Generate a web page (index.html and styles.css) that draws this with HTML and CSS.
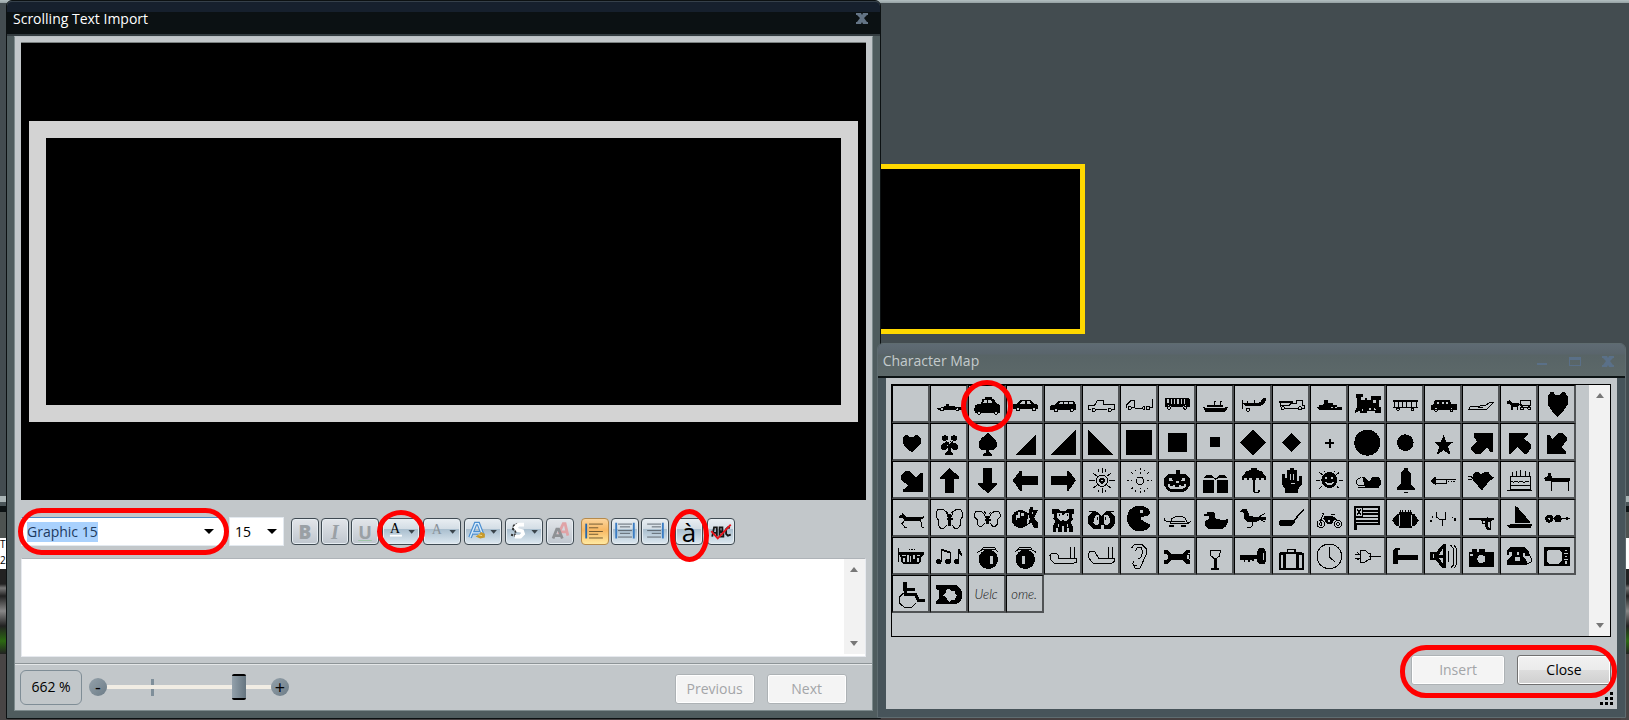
FILE: index.html
```html
<!DOCTYPE html>
<html lang="en">
<head>
<meta charset="utf-8">
<title>Scrolling Text Import</title>
<link rel="stylesheet" href="styles.css">
</head>
<body>
<main class="desktop">
  <div class="edge edge-left"><span class="scrap">T</span><span class="scrap">2s</span></div>
  <div class="edge edge-right"></div>
  <div class="sign"></div>

  <section class="window import" aria-labelledby="import-title">
    <header class="titlebar">
      <h1 id="import-title">Scrolling Text Import</h1>
      <button class="winbtn" type="button" aria-label="Close window"><svg width="12" height="11" viewBox="0 0 12 11"><path d="M0 0h5l1 2 1-2h5v2h-1L8 5l3 4h1v2H7L6 9l-1 2H0V9h1l3-4-3-3H0z"/></svg></button>
    </header>
    <div class="content">
      <div class="preview"><div class="preview-frame"></div></div>
      <div class="toolbar">
        <div class="combo font-combo"><span class="picked">Graphic 15</span><button type="button" class="drop" aria-label="Choose font"></button><span class="mark mark-font"></span></div>
        <div class="combo size-combo"><span>15</span><button type="button" class="drop" aria-label="Choose size"></button></div>
        <div class="tools">
          <button type="button" class="tool off bold" aria-label="Bold">B</button>
          <button type="button" class="tool off italic" aria-label="Italic">I</button>
          <button type="button" class="tool off under" aria-label="Underline">U</button>
        </div>
        <div class="tools wide">
          <button type="button" class="tool split" aria-label="Font colour"><svg viewBox="0 0 38 27"><text x="7" y="15" class="serif">A</text><path d="M7 17h13v2H7z" fill="#fff"/><path d="M27 12h7l-3.500 4z" class="arr"/></svg><span class="mark mark-round"></span></button>
          <button type="button" class="tool split" aria-label="Outline colour"><svg viewBox="0 0 38 27"><text x="8" y="16" class="serif pale">A</text><path d="M27 12h7l-3.500 4z" class="arr"/></svg></button>
          <button type="button" class="tool split" aria-label="Text fill"><svg viewBox="0 0 38 27"><path d="M5 20L11 5h3l5 13M8 15h8" fill="none" stroke="#4c8fd0" stroke-width="4"/><path d="M5 20L11 5h3l5 13M8 15h8" fill="none" stroke="#d9ecfb" stroke-width="1.500"/><path d="M11 19l3-2 3-3 4 2v4l-5 1z" fill="#c79a2c"/><path d="M14 17l4 1" stroke="#f6dc80"/><path d="M27 12h7l-3.500 4z" class="arr"/></svg></button>
          <button type="button" class="tool split" aria-label="Text shadow"><svg viewBox="0 0 38 27"><path d="M13 5l-5 2-1 4 3 2-1 5-4-1" fill="none" stroke="#333" stroke-width="2" stroke-dasharray="3 1"/><path d="M19 6h-6l-3 3 2 3 5 1 1 3-3 3H9" fill="none" stroke="#fff" stroke-width="4"/><path d="M27 12h7l-3.500 4z" class="arr"/></svg></button>
          <button type="button" class="tool off" aria-label="Clear style"><svg viewBox="0 0 27 27"><path d="M12 16L17 5h2l3 13M14 14h8" fill="none" stroke="#e0a3a6" stroke-width="3"/><path d="M6 21l4-10h2l4 10M7 18h8" fill="none" stroke="#8f9194" stroke-width="3"/></svg></button>
        </div>
        <div class="tools">
          <button type="button" class="tool on" aria-label="Align left"><svg viewBox="0 0 27 27"><path d="M4 5v16" stroke="#2668ae" stroke-width="2"/><path d="M7 5.500h15M7 9.500h10M7 13.500h15M7 16.500h10M7 20.500h15" stroke="#6b5530"/></svg></button>
          <button type="button" class="tool" aria-label="Align centre"><svg viewBox="0 0 27 27"><path d="M4 4v17M23 4v17" stroke="#3a7dc4" stroke-width="2"/><path d="M6 5.500h15M8 8.500h11M6 12.500h15M8 15.500h11M6 19.500h15" stroke="#59616a"/></svg></button>
          <button type="button" class="tool" aria-label="Align right"><svg viewBox="0 0 27 27"><path d="M22 4v17" stroke="#3a7dc4" stroke-width="2"/><path d="M5 5.500h15M10 8.500h10M5 12.500h15M10 15.500h10M5 19.500h15" stroke="#59616a"/></svg></button>
        </div>
        <div class="tools gap">
          <button type="button" class="tool accent" aria-label="Character map">à<span class="mark mark-tall"></span></button>
          <button type="button" class="tool" aria-label="Spelling"><svg viewBox="0 0 27 27"><path d="M4 19l2-10h3v10M4 15h5M12 19V9h3v4l-3 1h4v5h-4M23 10l-2-1-2 2v5l2 2 3-1" fill="none" stroke="#151515" stroke-width="2"/><path d="M3 13l7 8L24 6" fill="none" stroke="#e8141c" stroke-width="2"/></svg></button>
        </div>
      </div>
      <div class="editor"><textarea aria-label="Text"></textarea><div class="scroll"><i class="up"></i><i class="down"></i></div></div>
      <footer class="footer">
        <output class="percent">662 %</output>
        <div class="zoom">
          <button type="button" class="round" aria-label="Zoom out">-</button>
          <div class="track"><span class="tick"></span><input type="range" aria-label="Zoom" min="0" max="100" value="83"></div>
          <button type="button" class="round" aria-label="Zoom in">+</button>
        </div>
        <div class="nav"><button type="button" class="btn" disabled>Previous</button><button type="button" class="btn" disabled>Next</button></div>
      </footer>
    </div>
  </section>

  <section class="window charmap" aria-labelledby="map-title">
    <header class="titlebar">
      <h2 id="map-title">Character Map</h2>
      <button class="winbtn" type="button" aria-label="Minimize"><svg width="12" height="11" viewBox="0 0 12 11"><path d="M1 7h10v2H1z"/></svg></button>
      <button class="winbtn" type="button" aria-label="Maximize"><svg width="12" height="11" viewBox="0 0 12 11"><path d="M0 1h12v9H0zM1 4v5h10V4z" fill-rule="evenodd"/></svg></button>
      <button class="winbtn" type="button" aria-label="Close"><svg width="12" height="11" viewBox="0 0 12 11"><path d="M0 0h5l1 2 1-2h5v2h-1L8 5l3 4h1v2H7L6 9l-1 2H0V9h1l3-4-3-3H0z"/></svg></button>
    </header>
    <div class="content">
      <div class="list"><div class="cells" id="cells"></div><div class="scroll"><i class="up"></i><i class="down"></i></div></div>
      <div class="actions"><button type="button" class="btn" disabled>Insert</button><button type="button" class="btn live">Close</button><span class="mark mark-actions"></span></div>
      <svg class="grip" width="14" height="14" viewBox="0 0 14 14"><path d="M10 0h3v3h-3zM5 5h3v3H5zM10 5h3v3h-3zM0 10h3v3H0zM5 10h3v3H5zM10 10h3v3h-3z"/></svg>
    </div>
  </section>
</main>
<script src="script.js"></script>
</body>
</html>
```

FILE: styles.css
```css
* { box-sizing: border-box; }
body { margin: 0; font: 14px/20px "Open Sans", "Noto Sans", sans-serif; color: #000; }
button, input, textarea { font: inherit; color: inherit; }
button { padding: 0; }
h1, h2 { margin: 0; font-size: 14px; font-weight: 400; line-height: 20px; flex: 1; }

.desktop { position: relative; min-height: 100vh; overflow: hidden; background: linear-gradient(#b3bfc1, #95a1a3) top / 100% 3px no-repeat, linear-gradient(#453f40, #453f40) bottom / 100% 2px no-repeat, #434c50; }
.edge { position: absolute; top: 496px; bottom: 0; width: 8px; background: linear-gradient(#a9b4b5 0 6px, #4a5558 6px 10px, #0d1314 10px 16px, #4d5351 16px 42px, #fff 42px 73px, #222 73px 88px, #777 92px, #222 100px, #888 115px, #222 130px, #2c6a12 145px, #222 158px, #484545 158px); }
.edge-left { left: 0; padding-top: 40px; }
.edge-right { right: 0; }
.scrap { display: block; font-size: 10px; line-height: 16px; }
.sign { position: absolute; left: 50%; width: calc(17% - 6px); top: 164px; height: 170px; background: #000; border: 5px solid #ffd800; }

.window { position: absolute; display: flex; flex-direction: column; border: 1px solid #0c1112; border-radius: 6px 6px 0 0; }
.import { left: 6px; width: calc(54% - 5px); top: 0; bottom: 1px; background: #4f5c5e; }
.charmap { right: 3px; width: 46%; top: 343px; bottom: 2px; border-color: #5f6c70; background: #47545a; }
.titlebar { display: flex; align-items: center; gap: 21px; height: 35px; border-radius: 5px 5px 0 0; color: #fff; border-bottom: 2px solid #333c40; background: linear-gradient(#16202d 0 10px, #0b1113 10px 32px, #20292c); padding: 1px 12px 0 6px; border-top: 1px solid #35404a; }
.charmap .titlebar { height: 34px; color: #c4cbcd; background: linear-gradient(#5f6b74, #5a656c 10px, #586466 11px, #5c6869); border: 0; border-bottom: 2px solid #0d1415; padding: 2px 11px 0 5px; }
.winbtn { border: 0; background: none; display: flex; }
.winbtn path { fill: #637485; }
.charmap .winbtn path { fill: #5a7088; }
.content { flex: 1; display: flex; flex-direction: column; margin: 0 8px; background: #c2c7ca; min-height: 0; }
.import .content { margin: 0 7px 7px; padding: 5px 0 0; border: 1px solid #7d8a8c; border-top-color: #b9c0c3; }
.preview { flex: 1; margin: 0 6px; background: #000; padding: 78px 8px; display: flex; border-top: 1px solid #7a8080; }
.preview-frame { flex: 1; border: 17px solid #d3d3d3; }

.toolbar { display: flex; align-items: center; height: 58px; margin: 0 6px; padding-top: 5px; }
.combo { position: relative; display: flex; align-items: center; height: 29px; background: #fff; border: 1px solid #e3e9ef; border-top-color: #4a8cc7; }
.font-combo { width: 204px; padding-left: 5px; }
.size-combo { width: 55px; margin-left: 4px; border-top-color: #e3e9ef; padding-left: 5px; }
.picked { background: #a9d1fd; color: #1d3a5f; }
.drop { margin-left: auto; width: 22px; height: 22px; border: 0; background: none; display: grid; place-items: center; }
.drop::before { content: ""; border: 5px solid transparent; border-top-color: #000; border-bottom: 0; }
.font-combo .drop { margin-right: 4px; }
.tools { display: flex; gap: 2px; margin-left: 7px; }
.tools.wide { gap: 3px; margin-left: 3px; }
.tools.gap { gap: 4px; margin-left: 6px; }
.tool { position: relative; width: 28px; height: 27px; border: 1px solid #3f4a52; border-radius: 4px; background: linear-gradient(#e9eef2, #d3dde5 40%, #a9bece 41%, #dde8f0); box-shadow: inset 0 0 0 1px #e6edf2; display: grid; place-items: center; }
.tool svg { display: block; width: 100%; height: 25px; }
.split { width: 38px; }
.off { background: linear-gradient(#e2e5e9, #bfc6ce); color: #9aa0a5; }
.bold { font-size: 19px; font-weight: 800; }
.italic { font: italic bold 20px/20px "Liberation Serif", serif; }
.under { font-size: 18px; font-weight: 700; text-decoration: underline #9fc6a8; }
.on { background: linear-gradient(#fbd49c, #f8b863 45%, #ffe9a0); border-color: #b58a4c; box-shadow: none; }
.accent { font: 26px/26px "Open Sans", sans-serif; }
.serif { font: 15px "Liberation Serif", serif; }
.pale { fill: #8a9298; }
.arr { fill: #3a444b; }

.mark { position: absolute; z-index: 2; border: 5px solid #f00; pointer-events: none; }
.mark-font { inset: -10px -5px -10px -4px; border-radius: 25px; }
.mark-round { inset: -9px -6px -9px -6px; border-radius: 50%; }
.mark-tall { inset: -10px -7px -18px -6px; border-radius: 50%; }
.mark-cell { inset: -6px -9px -11px -8px; border-radius: 50%; }
.mark-actions { inset: -10px -6px -13px -11px; border-radius: 26px; }

.editor { display: flex; height: 99px; margin: 0 6px; background: #fff; border: 1px solid #e6e9ee; border-top-color: #aeb3b8; }
.editor textarea { flex: 1; border: 0; resize: none; background: none; outline: 0; }
.scroll { width: 21px; margin-bottom: 2px; background: #f2f2f2; display: flex; flex-direction: column; justify-content: space-between; align-items: center; padding: 8px 0; }
.scroll i { border: 4px solid transparent; }
.scroll .up { border-top: 0; border-bottom: 5px solid #777; }
.scroll .down { border-bottom: 0; border-top: 5px solid #777; }
.footer { display: flex; align-items: center; height: 47px; margin-top: 6px; border-top: 1px solid #8d9497; box-shadow: inset 0 1px #e4e7e8; padding: 0 25px 0 5px; }
.percent { width: 62px; height: 35px; display: grid; place-items: center; border: 1px solid #7f8d96; border-radius: 6px; }
.zoom { display: flex; align-items: center; margin-left: 7px; }
.round { width: 18px; height: 18px; border: 0; border-radius: 50%; background: linear-gradient(135deg, #94a1aa, #6c7c87); font-size: 18px; line-height: 16px; }
.track { position: relative; width: 164px; height: 28px; display: flex; align-items: center; }
.tick { position: absolute; left: 44px; top: 6px; width: 3px; height: 17px; background: #7f8f9a; }
.track input { position: relative; appearance: none; width: 100%; height: 28px; margin: 0; background: linear-gradient(#f1ede4, #f1ede4) center / 100% 4px no-repeat; }
.track input::-webkit-slider-thumb { appearance: none; width: 14px; height: 26px; border: solid #000; border-width: 2px 0; border-radius: 2px; background: linear-gradient(90deg, #93a1ab, #657580); }
.nav { display: flex; gap: 12px; margin-left: auto; padding-top: 3px; }
.btn { height: 30px; min-width: 80px; border: 1px solid #adb2b5; border-radius: 3px; background: #f4f4f4; box-shadow: inset 0 0 0 1px #fff; }
.btn:disabled { color: #a3a5a8; }
.live { border-color: #707070; background: linear-gradient(#f2f2f2, #ebebeb 49%, #dddddd 50%, #cfcfcf); }

.charmap .content { position: relative; margin-bottom: 8px; padding: 6px 6px 0 5px; }
.list { display: flex; height: 253px; border: 1px solid #000; }
.list .scroll { margin: 0; }
.cells { flex: 1; display: flex; flex-wrap: wrap; align-content: flex-start; }
.cell { position: relative; width: 38px; height: 38px; border: 1px solid #000; border-right: 2px solid #505355; border-bottom: 2px solid #505355; background: #c2c7ca; }
.cell svg { position: absolute; left: -1px; top: -1px; width: 38px; height: 38px; display: block; }
.cell .cut { fill: #c2c7ca; }
.cell .line { fill: none; stroke: #000; stroke-width: 3px; }
.word { font: italic 300 13px/16px Lato, sans-serif; color: #111; }
.actions { position: relative; display: flex; gap: 12px; align-self: flex-end; margin-top: 18px; }
.actions .btn { width: 94px; }
.grip { position: absolute; right: 3px; bottom: 3px; }
```

FILE: script.js
```js
// Glyph drawings on a 114-unit square: [name, solid, cut-out, line]
const c = (x, y, r) => `M${x - r} ${y}a${r} ${r} 0 1 0 ${2 * r} 0a${r} ${r} 0 1 0 ${-2 * r} 0z`;
const wheels = (a, b, y, r = 5) => c(a, y, r) + c(b, y, r);

const glyphs = [
  ['Blank'],
  ['Racing car', 'M20 69h10l12-5h6v-8h8v6h12l10 4h18v8H26z', wheels(36, 82, 73, 6), wheels(36, 82, 73)],
  ['Car', 'M19 72l3-12 10-4h6l6-14h8v-6h20v6h6l8 14 8 3 3 13v13H20z', 'M43 55l6-9h8v9zM61 46h8l5 9H61z' + wheels(32, 84, 83, 5), wheels(32, 84, 83)],
  ['Saloon', 'M22 58l12-2 12-12h26l12 12 12 4v12H22z', 'M42 56l8-8h6v8zM62 48h8l6 8H62z' + wheels(36, 84, 73, 6), wheels(36, 84, 73)],
  ['Estate', 'M19 62l16-4 10-11h44l6 11v16H19z', 'M42 58l6-6h8v6zM61 52h10v6H61zM76 52h10v6H76z' + wheels(36, 83, 75, 6), wheels(36, 83, 75)],
  ['Pickup', '', '', 'M28 73h-8V60h18l8-13h17v11h34v15h-8M76 73H43' + wheels(35, 83, 75)],
  ['Truck', '', '', 'M20 68V60l14-15h10v23h-8M44 69h22M88 68h8V43' + wheels(29, 84, 69) + c(71, 69, 4)],
  ['Bus', 'M24 38h66l5 6v22H20V44z', 'M28 42h4v12h-4zM38 42h4v14h-4zM48 42h4v14h-4zM58 42h4v14h-4zM68 42h4v14h-4zM78 42h4v14h-4z' + wheels(32, 82, 68, 7), wheels(32, 82, 68)],
  ['Ship', 'M20 66h12v-5h50v5h14l-8 14H28z', 'M28 67h60v2H28z', 'M54 60V52l6-4M72 60V52l6-4'],
  ['Aeroplane', 'M24 54h50l6-4 8-12h8v8l-8 12-14 6H34z', '', 'M24 46v26M40 48v8M60 46v8' + c(42, 74, 5)],
  ['Fire engine', 'M20 48h42v5H20z', '', 'M24 53v14M24 62h26l6-6h16V46h18v14l6 2v8h-6M38 70h40' + wheels(32, 84, 70)],
  ['Battleship', 'M20 66h6v-6h12v-4h4V45h12v9h14v6h14v6h14v8H28z', 'M62 66h6v3h-6zM74 66h6v3h-6z', ''],
  ['Locomotive', 'M24 28h22v8h-6v10h10v-6h6v6h12V34h30v10h-4v22h4v17H80v-6H58v6H36v-6l-14 6v-8l6-8V38h-4z', 'M74 44h10v10H74z' + c(66, 73, 4) + c(80, 73, 3) + c(44, 75, 3), ''],
  ['Tram', 'M20 44h76v6H20z', '', 'M26 50v20M38 50v18M50 50v18M62 50v18M76 50v18M90 50v20M20 68h76' + wheels(36, 80, 73, 4)],
  ['Taxi', 'M28 58l5-13h44l6 13h15v17H22V60z', 'M40 50h6v8h-6zM53 50h6v8h-6zM66 50h6v8h-6z' + wheels(36, 82, 76, 6), wheels(36, 82, 76, 4)],
  ['Jet', '', '', 'M20 74l4-9 46-3 14-11h11L80 67l-8 7zM48 68h16'],
  ['Carriage', 'M20 48l8-2 8 8h20v10h-2v12h-4V66H38v10h-4V60l-14-4z', '', 'M62 45h30v16H62zM56 58h8v10h26' + wheels(66, 88, 70)],
  ['Large heart', 'M38 21h8l6 8h14l6-8h8l9 14v24l-10 14-8 12-12 12-12-12-8-12-10-14V35z', '', ''],

  ['Small heart', 'M38 37h8l8 6h8l8-6h8l8 8v16L75 74l-9 9-7 4-7-4-9-9-11-13V45z', '', ''],
  ['Club', c(45, 46, 9) + c(72, 46, 9) + c(43, 71, 10) + c(74, 71, 10) + 'M48 50l10 6 10-6 2 12-8 4v18l8 8v5H46v-5l8-8V66l-8-6z', c(59, 59, 3) + 'M52 52h4v4h-4zM62 52h4v4h-4z', ''],
  ['Spade', 'M59 29l9 9 11 8 8 12v14l-8 8H64v8l8 6v4H46v-4l8-6v-8H40l-8-8V58l8-12 11-8z', '', ''],
  ['Slope', 'M90 36v61H27z', '', ''],
  ['Right triangle', 'M96 21v76H19z', '', ''],
  ['Left triangle', 'M19 21v76h77z', '', ''],
  ['Large square', 'M19 21h77v76H19z', '', ''],
  ['Square', 'M30 30h58v57H30z', '', ''],
  ['Small square', 'M42 42h30v30H42z', '', ''],
  ['Large diamond', 'M58 20l39 39-39 39-39-39z', '', ''],
  ['Diamond', 'M59 30l29 29-29 29-29-29z', '', ''],
  ['Small diamond', 'M56 48h6v10h11v6H62v11h-6V64H45v-6h11z', '', ''],
  ['Large disc', c(58, 59, 39), '', ''],
  ['Disc', c(58, 59, 25), '', ''],
  ['Star', 'M59 36l8 20h22L72 70l8 26-21-14-21 14 8-26-17-14h22z', '', ''],
  ['Arrow up right', 'M36 30h56v58l-8-2-8-12-18 18H40L28 80v-6l18-18-10-14z', '', ''],
  ['Arrow up left', 'M28 30h56v4L72 46l20 18v14L80 92h-8L54 72 34 92h-6z', '', ''],
  ['Arrow down left', 'M28 36h6l10 12 18-18h12l14 14v8L70 72l14 12v8H28z', '', ''],

  ['Arrow down right', 'M42 29h10l20 20 12-12h8v55H34v-6l14-12-20-18V42z', '', ''],
  ['Arrow up', 'M59 21l29 27v5H72v44H46V53H30v-5z', '', ''],
  ['Arrow down', 'M46 21h26v45h16v5L59 97 30 71v-5h16z', '', ''],
  ['Arrow left', 'M20 58l22-29h6v15h48v28H48v17h-6z', '', ''],
  ['Arrow right', 'M96 58L74 29h-6v15H20v28h48v17h6z', '', ''],
  ['Sun', c(60, 59, 9), c(60, 59, 3), 'M60 21v16M60 81v16M22 59h16M82 59h16M32 36l14 10M74 72l14 10M88 36L74 46M46 72L32 82M48 24l2 8M72 24l-2 8M48 94l2-8M72 94l-2-8' + c(60, 59, 17)],
  ['Soft sun', '', '', 'M60 22v5M60 34v5M60 80v5M60 91v5M22 59h4M32 59h5M82 59h5M92 59h5M34 34l5 5M80 80l5 5M86 34l-5 5M39 80l-5 5M47 26v4M73 26v4M47 88v4M73 88v4' + c(60, 59, 11)],
  ['Pumpkin', 'M54 27h12v11h16l14 14v22L84 88l-8 5H38l-8-5-12-14V52l14-14h22z', 'M34 50h6l6 10H34zM68 60l6-10h6v10zM54 60h8v5h-8zM30 70h6v5h10v-3h6v5h10v-5h6v3h10v-5h6v8l-10 6H40l-10-6z', ''],
  ['Gift', 'M20 56h34v41H20zM62 56h34v41H62zM32 42h14l10 8h6l8-8h14l8 6v4H66l-7 4-7-4H24v-4z', '', ''],
  ['Umbrella', 'M52 22h16v4l16 6 12 16v8h-6v-4h-8v4h-8v-4h-8v4H54v-4h-8v4h-8v-4h-8v4h-6v-8l12-16 16-6zM57 50h6v42h8v-6h6v7l-6 4h-8l-6-4z', '', ''],
  ['Hand', 'M46 28h7v-7h14v7h8v32h6V44h8v26L78 86v11H40V86L31 72V38h9v12h6z', 'M53 38h3v18h-3zM64 38h3v18h-3zM56 66h12v3H56z', ''],
  ['Smiling sun', c(58, 57, 24), 'M46 48h6v5h-6zM64 48h6v5h-6zM44 62h5l5 5h10l5-5h4l-6 9H50z', 'M18 57h12M86 57h12M28 34l10 8M88 34l-10 8M28 82l8-6M88 82l-8-6M44 30v4M72 30v4'],
  ['Sleigh', 'M42 47h6l16 14 8-12h20l6 8v14l-8 8H52z', '', 'M50 74H32l-7-8 2-10 12-6M30 80h64'],
  ['Bell', 'M53 20h12v8l9 8v32l12 14v6H32v-6l12-14V36l9-8zM53 92h12v5H53z', '', ''],
  ['Dagger', 'M18 60l18-14v28z', '', 'M34 54h62M34 68h32V54M72 60h4M80 60h4M88 60h4'],
  ['Heart and arrow', 'M40 32h8l10 8 10-8h10l8 10v14L66 80l-6 8-8-8-20-24V42zM86 44l12 6-12 8z', '', 'M18 46h8l8 8M18 54h12'],
  ['Cake', '', '', 'M32 47h60v39H32zM32 60l8 4 8-4 8 4 8-4 8 4 8-4 8 4M32 72h60M20 89h77M38 46V32M50 46V30M62 46V28M76 46V30M88 46V32'],
  ['Dog', 'M18 52l10-6 4-10h5l6 14h48l6 4v5l-4 3H40l-4-2H22z', '', 'M40 60v30M90 58v32'],

  ['Fox', 'M18 54l10-6 6-12v10l8 8h42l12-2v4l-8 5v6H42l-8-9H22z', '', 'M38 64l-8 10 8 10h6M86 64l4 20h7'],
  ['Butterfly', 'M54 46h10v34H54zM50 58h18v5H50z', '', 'M54 54l-4-14-10-8H24l-4 6v18l6 8v16l6 8h10l8-10M64 54l4-14 10-8h14l4 6v18l-6 8v16l-6 8H74l-8-10M54 42l-6-6M64 42l6-6'],
  ['Small butterfly', 'M54 50h10v26H54zM50 60h18v5H50z', '', 'M54 56l-6-12-8-6H24l-4 6v10l8 8v14l6 6h8l8-10M64 56l6-12 8-6h14l4 6v10l-8 8v14l-6 6h-8l-8-10M54 44l-6-6M64 44l6-6'],
  ['Fish', c(44, 60, 27) + 'M66 50l6-26h10v8h14l-12 24 12 16v14H84l-8-14-14 4z', 'M30 48h6v-8h6v16h-8v8h-4zM44 42h10v10H44zM78 40h4v6h-4z', ''],
  ['Owl', 'M24 30h20l4 6h18l4-6h20v14l-8 4 6 14-8 8 6 12v16H76V88h-6v10H60V80h-6v18H42V88h-6v10H26V82l8-14-6-10 4-10-8-4z', 'M38 42h14l6 8 6-8h12v14L66 68l-8-6-8 6-12-12zM42 74h4v10h-4zM68 74h4v10h-4z', 'M46 46v6M70 46v6'],
  ['Owl eyes', 'M30 40h18l10 10 12-10h16l12 12v24L84 91H66V79h-8v12H36L19 76V52z', 'M36 58l8-10h6v26l-8 6-8-8zM66 48h12l6 10v14l-8 8-10-6z', 'M22 36h20M72 36h24M46 54v8M70 54v8'],
  ['Chomper', 'M92 42L84 28 70 21H46L28 34l-6 16v18l8 16 16 12h24l14-6 8-12-8-4-20-12v-8l20-4z', 'M60 34h8v8h-8z', ''],
  ['Turtle', 'M32 78h16v6H32zM68 78h16v6H68z', '', 'M36 72l6-14 12-6h16l12 6 6 14M20 56v8l10 4h8M36 74h52l10-6M40 68h40'],
  ['Duck', 'M34 38h16l8 6v14l26 6 12-4v8l-8 16-10 6H38L26 80V68l12-8v-8H24v-6h8z', '', ''],
  ['Bird', 'M18 38l8-8h12l6 12v8l22 4h30v8H78l-14 8H42L30 60V42z', '', 'M56 70v10l-8 6h-8M72 56l22-14M78 62l14 6'],
  ['Brush', 'M20 68l6-5h38l28-32 5-3v4L68 66v6l-8 8H24l-4-4z', '', ''],
  ['Motorcycle', 'M42 52h26l14 8v4H72l-8 12H52L40 58z', c(58, 66, 3), 'M30 68l12-26h-6M62 46h12' + wheels(32, 84, 75, 11) + wheels(32, 84, 75, 4)],
  ['Flag', 'M19 21h77v58H28v13h-9z', 'M46 27h44v5H46zM46 38h44v5H46zM46 48h44v5H46zM25 58h65v5H25zM25 68h65v5H25zM25 27h16v24H25z', 'M26 29l14 20M40 29L26 49'],
  ['Football', 'M18 64l14-18h8v-6h38v6h8l12 18-12 18h-8v6H40v-6h-8z', 'M38 48h3v34h-3zM76 48h3v34h-3z', 'M42 34v8M50 32v10M58 34v8M66 32v10M74 34v8'],
  ['Antenna', 'M18 64h5v6h-5zM24 52h4v4h-4zM84 54h4v4h-4zM90 58h7v8h-7z', '', 'M38 38v16l8 6h18V38M54 60v20'],
  ['Pistol', 'M20 58h54v-5h5v4h17v6l-8 2v27H74l-6-16h-8v-8l-4-4H20z', 'M62 66h8v6h-8zM76 68h9v18h-5z', ''],
  ['Sailing boat', 'M46 22l6 2 38 44v4H46zM20 78l22-3h56l-8 13H30z', '', ''],
  ['Beads', c(34, 59, 12) + c(60, 59, 11) + 'M84 53l12 6-12 6z', c(34, 59, 3), 'M44 59h50'],

  ['Trumpet', 'M20 46h76v6l-8 10v12l-8 6H34l-8-6V60l-6-8z', 'M30 54h12v4H30zM34 62h6v12h-6zM46 54h4v20h-4zM54 58h4v16h-4zM64 54h4v12h-4zM74 54h10v4H74zM74 62h6v12h-6z', 'M19 34v40M50 38h4M58 38h4M66 38h4'],
  ['Music notes', c(26, 74, 8) + c(54, 74, 8) + c(80, 74, 8) + 'M32 36h6l24 8v6L38 42h-6zM84 36h4l8 14v8l-8-8z', '', 'M33 40v36M60 46v28M86 38v36'],
  ['Gauge right', c(61, 67, 29), 'M66 56h8v26h-8z', 'M28 46l14-8h40l8 6M42 34l8-4h28l6 6'],
  ['Gauge left', c(58, 67, 29), 'M48 56h8v26h-8z', 'M28 44l8-6h40l14 8M36 36l6-6h28l8 4'],
  ['Pipe', '', '', 'M96 64H44V56l-6-6H22l-4 6v10l14 14h54l10-4zM80 64V30M92 64V30'],
  ['Curved pipe', '', '', 'M96 64H50L38 44H24l-4 6v12l14 18h54l8-6zM80 64V30M92 64V30'],
  ['Ear', '', '', 'M34 34l10-12h22l12 12v20L66 80l-6 14H46l-8-14 4-6M46 42l6-10h12l4 12-4 16-10 6M40 84h12'],
  ['Wrench', 'M18 40h10l12 10h36l10-10h10v8h-6l-4 6v10l4 6h6v10H84L76 70H40L28 80H18V70h8l4-6V56l-4-6h-8z', 'M18 54h8v12h-8z', c(88, 60, 8)],
  ['Wine glass', 'M55 62h7v30h8v6H46v-6h9z', '', 'M43 41h30l-2 16-8 6h-10l-8-6z'],
  ['Key', 'M18 55h52V42l6-8h14l7 12v26l-7 10H78l-8-8V66H60v6h-6v-4h-6v6h-6v-4h-8v4h-4v-6H18z', 'M86 48h3v22h-3z', ''],
  ['Suitcase', 'M34 44h10v-8h28v8h10l14 4v50H20V48z', 'M49 40h18v4H49zM26 54h7v38h-7zM43 50h29v42H43zM82 54h7v38h-7z', ''],
  ['Clock', '', '', c(58, 58, 37) + 'M58 31v29l16 14'],
  ['Plug', '', '', 'M20 53h16M20 65h16M38 41v34h14l10-8h4V50h-4L52 41zM64 59h34M26 47l8 2M26 69l8-2'],
  ['Hammer', 'M20 42l8-8h14v5h-6v14h60v15H36v12h-14V62l-2-8z', '', ''],
  ['Speaker', 'M18 46h18l20-24h10v72H56L36 70H18z', 'M26 50h5v14h-5zM56 36v18H44zM44 62h12v18z', 'M74 42v34M80 24l8 10v50l-8 10M90 24l8 12v46l-8 12'],
  ['Camera', 'M20 46h10V36h14v8h8v-8h18v8h26v47H20z', c(58, 66, 12) + 'M24 52h8v4h-8z', ''],
  ['Telephone', 'M30 30h44l12 14v12H74v-8h-6v8l12 16v11H20V70l16-14V46h-8v8h-8V42z', 'M50 46h8v8h-8zM44 60h16v12H44z', 'M84 48l10 16v10l-12 6M32 80h40'],
  ['Television', 'M19 30h77v57H19z', 'M34 38h30l8 8v26l-8 8H34l-8-8V46zM82 38h4v5h-4zM78 48h12v4H78zM82 56h4v5h-4zM78 66h12v3H78zM82 72h4v8h-4z', ''],

  ['Wheelchair', 'M32 22h14v16h24v10H46v6h28l8 18h16v10H78L66 62H36z', '', 'M34 54L22 66v18l14 12h24l12-12'],
  ['Link', 'M18 30h60l14 12 5 10v14l-5 12-14 10H18V78l10-8V48l-10-8z', 'M50 42h8l6 6h12v10l4 4-6 12-10 2-6 4-6-6-4-8-8-4 8-8z', ''],
  ['Welcome, first part', 'text:Uelc'],
  ['Welcome, second part', 'text:ome.'],
];

const host = document.getElementById('cells');
host.innerHTML = glyphs.map(([name, solid = '', cut = '', line = '']) => {
  const inner = solid.startsWith('text:')
    ? `<span class="word">${solid.slice(5)}</span>`
    : `<svg viewBox="0 0 114 114" shape-rendering="crispEdges"><path d="${solid}"/><path class="cut" d="${cut}"/><path class="line" d="${line}"/></svg>`;
  const mark = name === 'Car' ? '<span class="mark mark-cell"></span>' : '';
  return `<button type="button" class="cell" aria-label="${name}">${inner}${mark}</button>`;
}).join('');
```
